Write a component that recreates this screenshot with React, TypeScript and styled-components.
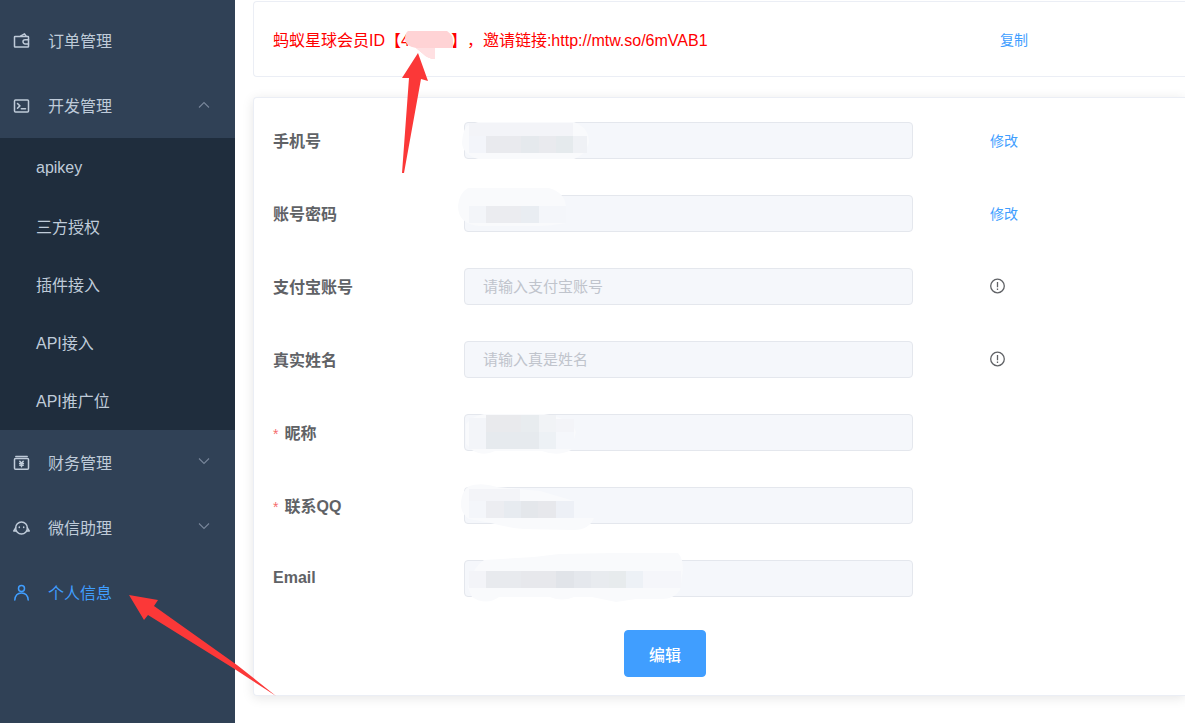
import React from 'react';
import styled, { createGlobalStyle } from 'styled-components';

const GlobalStyle = createGlobalStyle`
  *, *::before, *::after { box-sizing: border-box; }
  body {
    margin: 0;
    background: #fff;
    color: #606266;
    font-family: "Liberation Sans", "Noto Sans CJK SC", sans-serif;
    font-size: 16px;
  }
`;

const Page = styled.div`
  position: relative;
  display: flex;
  min-height: 100vh;
  overflow: hidden;
`;

const Sidebar = styled.nav`
  flex: 0 0 235px;
  padding-top: 8px;
  background: #304156;
`;

const MenuItem = styled.button<{ $active?: boolean }>`
  display: flex;
  align-items: center;
  width: 100%;
  height: 65px;
  padding: 0 25px 0 12px;
  border: 0;
  background: transparent;
  color: ${(p) => (p.$active ? '#409eff' : '#bfcbd9')};
  font: inherit;
  text-align: left;
  cursor: pointer;
`;

const MenuLabel = styled.span`
  flex: 1;
  margin-left: 18px;
  padding-bottom: 1px;
`;

const MenuIcon = styled.svg`
  width: 18px;
  height: 18px;
  fill: none;
  stroke: currentColor;
  stroke-width: 1.5;
  stroke-linejoin: round;
  stroke-linecap: round;
`;

const Chevron = styled.svg`
  width: 12px;
  height: 12px;
  fill: none;
  stroke: #78869a;
  stroke-width: 1.1;
`;

const SubMenu = styled.div`
  padding: 1px 0;
  background: #1f2d3d;
`;

const SubItem = styled.a`
  display: flex;
  align-items: center;
  height: 58px;
  padding-left: 36px;
  color: #bfcbd9;
  text-decoration: none;
`;

const Main = styled.main`
  flex: 1;
  min-width: 0;
  padding: 1px 0 26px 18px;
`;

const Card = styled.section<{ $raised?: boolean }>`
  border: 1px solid #ebeef5;
  border-right: 0;
  border-radius: 4px 0 0 4px;
  background: #fff;
  box-shadow: ${(p) => (p.$raised ? '0 2px 12px rgba(0, 0, 0, 0.1)' : 'none')};
`;

const InviteCard = styled(Card)`
  display: grid;
  grid-template-columns: minmax(0, 727px) auto;
  align-items: center;
  height: 76px;
  padding: 0 19px;
`;

const InviteText = styled.p`
  margin: 0;
  color: #ff0000;
  white-space: nowrap;
  text-spacing-trim: space-all;
`;

const HiddenId = styled.span`
  position: relative;
  display: inline-block;
  width: 41px;
`;

const IdSmear = styled.svg`
  position: absolute;
  left: -6px;
  top: -18px;
  width: 50px;
  height: 32px;
`;

const TextLink = styled.a`
  color: #409eff;
  font-size: 14px;
  text-decoration: none;
`;

const FormCard = styled(Card)`
  margin-top: 20px;
  padding: 24px 19px 18px;
`;

const Form = styled.form`
  display: flex;
  flex-direction: column;
  gap: 36px;
`;

const Row = styled.div`
  display: grid;
  grid-template-columns: 191px minmax(0, 449px) auto;
  align-items: center;
  height: 37px;
`;

const Label = styled.label`
  padding-bottom: 2px;
  font-weight: 700;
`;

const Required = styled.span`
  margin-right: 6px;
  color: #f56c6c;
  font-size: 14px;
  font-weight: 400;
`;

const Field = styled.div`
  position: relative;
  height: 37px;
`;

const Input = styled.input`
  display: block;
  width: 100%;
  height: 100%;
  padding: 0 18px;
  border: 1px solid #e4e7ed;
  border-radius: 4px;
  background: #f5f7fb;
  color: #606266;
  font: inherit;
  font-size: 15px;
  &::placeholder { color: #c0c4cc; opacity: 1; }
`;

const Smear = styled.svg`
  position: absolute;
  left: 0;
  top: 0;
  width: 230px;
  height: 37px;
  overflow: visible;
  pointer-events: none;
`;

const Action = styled.div`
  display: flex;
  padding: 0 0 2px 77px;
`;

const NoticeIcon = styled.svg`
  width: 16px;
  height: 16px;
  fill: none;
  stroke: #606266;
  stroke-width: 1.3;
`;

const Submit = styled.button`
  align-self: flex-start;
  height: 47px;
  margin: -3px 0 0 351px;
  padding: 0 24px;
  border: 1px solid #409eff;
  border-radius: 4px;
  background: #409eff;
  color: #fff;
  font: inherit;
  font-weight: 500;
  cursor: pointer;
`;

const Pointers = styled.svg`
  position: absolute;
  left: 0;
  top: 0;
  width: 300px;
  height: 700px;
  overflow: visible;
  fill: #fb3838;
  pointer-events: none;
`;

type IconName = 'wallet' | 'terminal' | 'finance' | 'assistant' | 'user';

const icons: Record<IconName, React.ReactNode> = {
  wallet: (
    <>
      <rect x="2.5" y="4.5" width="14" height="10.5" rx="0.6" />
      <path d="M8.5 4.2l4-2.4 1.6 2.4M16.5 7.7h-3.4a2.1 2.1 0 0 0 0 4.2h3.4" />
    </>
  ),
  terminal: (
    <>
      <rect x="2.5" y="3" width="14" height="12" rx="1" />
      <path d="M5.5 6.5l2.4 2.4-2.4 2.4M9.3 11.8h4.2" />
    </>
  ),
  finance: (
    <>
      <path d="M3.8 2.4h11.4" />
      <rect x="2.5" y="4.6" width="14" height="10.7" rx="1" />
      <path d="M7.8 7.2l1.7 2 1.7-2M7.6 9.5h3.8M7.8 11.2h3.4M9.5 9.3v3.5" />
    </>
  ),
  assistant: (
    <>
      <circle cx="9.5" cy="9" r="5.9" />
      <path d="M3.7 8.8L1.8 12h2.6M15.3 8.8l1.9 3.200h-2.6M7.300 8v.6M11.700 8v.6" />
    </>
  ),
  user: (
    <>
      <circle cx="9.5" cy="4.4" r="3" />
      <path d="M2.8 16c.4-4.800 3-7 6.700-7s6.300 2.200 6.700 7" />
    </>
  ),
};

function Item({ icon, label, arrow, active }: { icon: IconName; label: string; arrow?: 'up' | 'down'; active?: boolean }) {
  return (
    <MenuItem type="button" $active={active} aria-expanded={arrow ? arrow === 'up' : undefined}>
      <MenuIcon viewBox="0 0 18 18" aria-hidden="true">{icons[icon]}</MenuIcon>
      <MenuLabel>{label}</MenuLabel>
      {arrow && (
        <Chevron viewBox="0 0 12 12" aria-hidden="true">
          <path d={arrow === 'up' ? 'M1 7.5l5-5 5 5' : 'M1 1.5l5 5 5-5'} />
        </Chevron>
      )}
    </MenuItem>
  );
}

type Block = [x: number, y: number, width: number, height: number, color: string];

interface FieldSpec {
  id: string;
  label: string;
  required?: boolean;
  placeholder?: string;
  action?: 'edit' | 'notice';
  haze?: string;
  blocks?: Block[];
}

const fields: FieldSpec[] = [
  {
    id: 'phone',
    label: '手机号',
    action: 'edit',
    haze: 'M14 0H110Q125 6 125 20Q122 33 110 37H14Q-2 32-2 20Q-1 5 5 3Z',
    blocks: [
      [5, 1, 104, 13, '#f3f4f8'], [5, 14, 17, 17, '#f3f5fa'], [22, 14, 35, 17, '#e9eaee'],
      [57, 14, 18, 17, '#e5e9ed'], [75, 14, 17, 17, '#e9eaee'], [92, 14, 17, 17, '#e5eaed'], [109, 14, 14, 17, '#eff1f5'],
    ],
  },
  {
    id: 'password',
    label: '账号密码',
    action: 'edit',
    haze: 'M4-7H85Q100-3 102 11V28Q85 31 74 31H15Q-6 29-6 11Q-5-2 4-7Z',
    blocks: [[5, 11, 17, 17, '#f3f5f9'], [22, 11, 35, 17, '#ebecf0'], [57, 11, 18, 17, '#e9edf2'], [75, 11, 27, 17, '#f4f6fa']],
  },
  { id: 'alipay', label: '支付宝账号', placeholder: '请输入支付宝账号', action: 'notice' },
  { id: 'realname', label: '真实姓名', placeholder: '请输入真是姓名', action: 'notice' },
  {
    id: 'nickname',
    label: '昵称',
    required: true,
    haze: 'M20 0H80Q107 4 112 18L107 36Q94 43 78 37H31Q19 43 8 36L2 30V10Q8 2 20 0Z',
    blocks: [
      [5, 4, 17, 31, '#f3f5f9'], [22, 1, 35, 17, '#e9eaed'], [57, 1, 18, 17, '#e8ecef'], [75, 1, 17, 17, '#f1f3f6'],
      [92, 5, 18, 13, '#f3f4f8'], [22, 18, 53, 17, '#e6eaee'], [75, 18, 17, 17, '#edf1f5'], [92, 18, 18, 17, '#f5f7fb'],
    ],
  },
  {
    id: 'qq',
    label: '联系QQ',
    required: true,
    haze: 'M5-1Q18-5 33 0L76 4L110 14V31H130Q125 43 110 43L60 42Q40 40 27 36L5 32Q-4 26-3 15Q-2 4 5-1Z',
    blocks: [
      [5, 2, 51, 12, '#f3f4f8'], [5, 14, 17, 17, '#f4f6fa'], [22, 14, 18, 17, '#ecedf1'], [40, 14, 17, 17, '#e7ebf0'],
      [57, 14, 17, 17, '#e4e7eb'], [74, 14, 18, 17, '#e7e8ec'], [92, 14, 18, 17, '#edf0f6'],
    ],
  },
  {
    id: 'email',
    label: 'Email',
    haze: 'M20 0L70-3 95-6 150-7H214Q219-2 219 10L216 30Q210 39 198 39H172L152 42 128 37H110Q98 42 86 37H35Q22 46 8 37L4 28Q8 8 20 0Z',
    blocks: [
      [5, 11, 17, 17, '#f3f4f8'], [22, 11, 35, 17, '#e8eaee'], [57, 11, 35, 17, '#e7e8ec'], [92, 11, 18, 17, '#e1e4e9'],
      [110, 11, 17, 17, '#e5e8ed'], [127, 11, 18, 17, '#e8ebef'], [145, 11, 17, 17, '#e7ebed'], [162, 11, 17, 17, '#edf1f6'], [179, 11, 38, 17, '#f5f6fa'],
    ],
  },
];

function FormRow({ field }: { field: FieldSpec }) {
  return (
    <Row>
      <Label htmlFor={field.id}>
        {field.required && <Required>*</Required>}
        {field.label}
      </Label>
      <Field>
        <Input id={field.id} type="text" placeholder={field.placeholder} disabled />
        {field.haze && (
          <Smear viewBox="0 0 230 37" aria-hidden="true">
            <path d={field.haze} fill="#f9fafc" />
            {field.blocks?.map(([x, y, width, height, color]) => (
              <rect key={`${x}-${y}`} x={x} y={y} width={width} height={height} fill={color} />
            ))}
          </Smear>
        )}
      </Field>
      <Action>
        {field.action === 'edit' && <TextLink href="#edit">修改</TextLink>}
        {field.action === 'notice' && (
          <NoticeIcon viewBox="0 0 16 16" role="img" aria-label="提示">
            <circle cx="7.5" cy="8" r="6.8" />
            <path d="M7.5 4v5.2M7.5 10.6v1.4" />
          </NoticeIcon>
        )}
      </Action>
    </Row>
  );
}

const apiPages = ['apikey', '三方授权', '插件接入', 'API接入', 'API推广位'];

export default function App() {
  return (
    <>
      <GlobalStyle />
      <Page>
        <Sidebar>
          <Item icon="wallet" label="订单管理" />
          <Item icon="terminal" label="开发管理" arrow="up" />
          <SubMenu>
            {apiPages.map((name) => (
              <SubItem key={name} href={`#${name}`}>{name}</SubItem>
            ))}
          </SubMenu>
          <Item icon="finance" label="财务管理" arrow="down" />
          <Item icon="assistant" label="微信助理" arrow="down" />
          <Item icon="user" label="个人信息" active />
        </Sidebar>
        <Main>
          <InviteCard>
            <InviteText>
              蚂蚁星球会员ID【4
              <HiddenId>
                <IdSmear viewBox="0 0 50 32" aria-hidden="true">
                  <path d="M4 3H43Q49 7 49 13V20H31V31Q24 31 18 25L12 20Q1 18 1 11Q1 5 4 3Z" fill="#ffd3d5" />
                  <path d="M12 20H31V31Q24 31 18 25Z" fill="#ffe0e2" />
                </IdSmear>
              </HiddenId>
              】，邀请链接:http://mtw.so/6mVAB1
            </InviteText>
            <TextLink href="#copy">复制</TextLink>
          </InviteCard>
          <FormCard $raised>
            <Form onSubmit={(e) => e.preventDefault()}>
              {fields.map((field) => (
                <FormRow key={field.id} field={field} />
              ))}
              <Submit type="submit">编辑</Submit>
            </Form>
          </FormCard>
        </Main>
        <Pointers viewBox="0 0 300 700" aria-hidden="true">
          <path d="M418 53L428 81 421 79 404 173H402L409 78 402 78Z" />
          <path d="M129 595L158 600 154 606 237 665 276 696 233 668 148 615 144 620Z" />
        </Pointers>
      </Page>
    </>
  );
}
